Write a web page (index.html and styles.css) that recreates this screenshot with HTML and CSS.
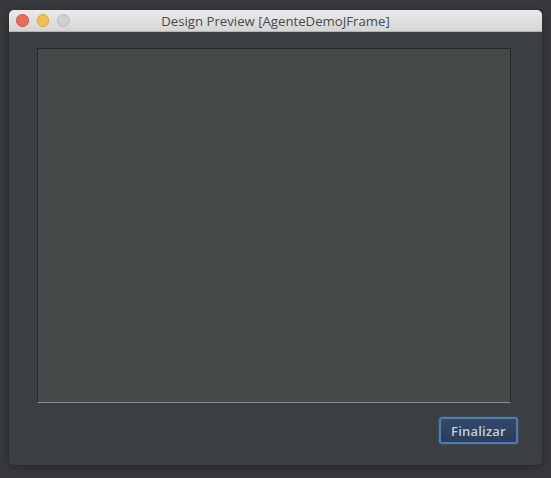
FILE: index.html
```html
<!DOCTYPE html>
<html>
<head>
<meta charset="utf-8">
<link rel="stylesheet" href="styles.css">
</head>
<body>
<div class="window">
  <div class="titlebar">
    <div class="lights">
      <span class="light red"></span>
      <span class="light yellow"></span>
      <span class="light gray"></span>
    </div>
    <div class="title">Design Preview [AgenteDemoJFrame]</div>
  </div>
  <div class="content">
    <div class="panel"></div>
    <div class="actions">
      <button class="btn">Finalizar</button>
    </div>
  </div>
</div>
</body>
</html>
```
FILE: styles.css
```css
html, body {
  margin: 0;
  padding: 0;
}
body {
  width: 551px;
  height: 478px;
  background: #37393c;
  padding: 10px 0 0 9px;
  box-sizing: border-box;
  font-family: "Liberation Sans", Arial, sans-serif;
}
.window {
  width: 533px;
  height: 455px;
  background: #3c3f41;
  border-radius: 5px;
  overflow: hidden;
  box-shadow: 0 2px 10px rgba(0,0,0,0.35);
  display: flex;
  flex-direction: column;
}
.titlebar {
  height: 22px;
  background: linear-gradient(#ebebeb, #d5d5d5);
  border-bottom: 1px solid #b5b5b5;
  box-sizing: border-box;
  position: relative;
  display: flex;
  align-items: center;
  justify-content: center;
}
.lights {
  position: absolute;
  left: 7px;
  top: 4px;
  display: flex;
  gap: 8px;
}
.light {
  width: 12.5px;
  height: 12.5px;
  border-radius: 50%;
  box-sizing: border-box;
}
.red { background: #ed6a5e; border: 1px solid #d6554a; }
.yellow { background: #f5bf4f; border: 1px solid #d9a53a; }
.gray { background: #cfcfcf; border: 1px solid #bdbdbd; }
.title {
  font-family: "Open Sans", "Liberation Sans", sans-serif;
  font-size: 13.2px;
  color: #4a4a4a;
}
.content {
  flex: 1;
  display: flex;
  flex-direction: column;
  padding: 16px 30px 0 28px;
}
.panel {
  width: 474px;
  height: 355px;
  box-sizing: border-box;
  background: #45494a;
  border: 1px solid #27292b;
  border-bottom: 1px solid #8a8d8f;
}
.actions {
  display: flex;
  justify-content: flex-end;
  padding-top: 14px;
  margin-right: -6px;
}
.btn {
  width: 79px;
  height: 27px;
  background: linear-gradient(#34496a, #2a3d5a);
  border: 2px solid #4e7bb0;
  border-radius: 3px;
  color: #c3cdd9;
  font-family: "Open Sans", "Liberation Sans", sans-serif;
  font-size: 13px;
  font-weight: 600;
  letter-spacing: 0.2px;
  padding: 0;
  box-shadow: 0 0 2px rgba(90,140,200,0.6);
}
```
